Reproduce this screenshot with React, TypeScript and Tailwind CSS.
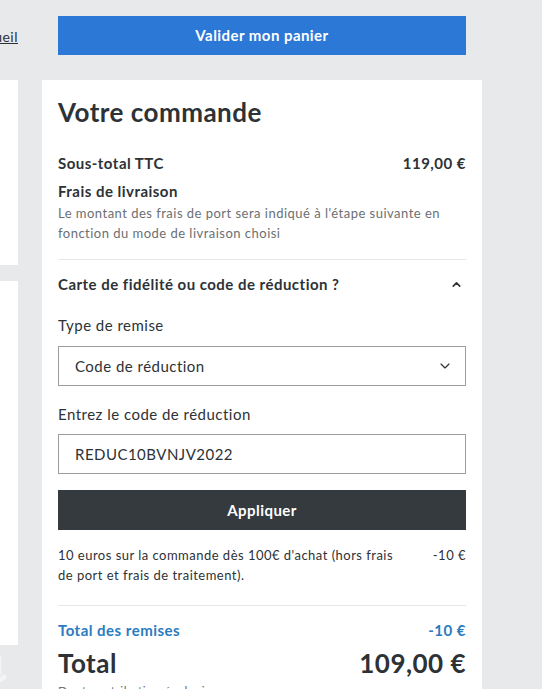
import { ChevronDown, ChevronUp } from "lucide-react";

const Row = ({ label, value }: { label: string; value: string }) => (
  <div className="flex items-center justify-between">
    <span>{label}</span>
    <span>{value}</span>
  </div>
);

export default function App() {
  return (
    <div
      className="w-[542px] h-[689px] overflow-hidden bg-[#e8e9eb] text-[#2d3236] tracking-[0.03em]"
      style={{ fontFamily: "Lato, 'Open Sans', sans-serif" }}
    >
      <div className="flex gap-6 ml-[-282px]">
        {/* left column, mostly off screen */}
        <div className="w-[300px] shrink-0">
          <div className="h-[80px] flex items-center justify-end">
            <a className="text-[14px] underline text-[#2d3236] -mt-[8px]">Retour à l'accueil</a>
          </div>
          <div className="bg-white h-[185px]" />
          <div className="bg-white h-[364px] mt-4" />
          <div className="flex justify-end pr-1 pt-1">
            <svg width="40" height="40" viewBox="0 0 40 40" fill="none">
              <path d="M4 26c4 8 18 10 26 2" stroke="#f4f4f5" strokeWidth="5" strokeLinecap="round" />
              <path d="M26 8v16" stroke="#f4f4f5" strokeWidth="3" strokeLinecap="round" />
            </svg>
          </div>
        </div>

        {/* right column */}
        <div className="w-[440px] shrink-0">
          <div className="h-[80px] px-4 pt-4">
            <button className="w-full h-[39px] bg-[#2b78d6] text-white text-[15px] font-bold tracking-[0.03em]">
              Valider mon panier
            </button>
          </div>
          <div className="bg-white px-4 pt-[17px] pb-6 h-[700px]">
            <h2 className="text-[26px] font-bold leading-[30px] text-[#2d3236]">Votre commande</h2>

            <div className="mt-[26px] text-[15px] font-bold leading-[20px]">
              <Row label="Sous-total TTC" value="119,00 €" />
            </div>
            <div className="mt-2 text-[15px] font-bold leading-[20px]">Frais de livraison</div>
            <p className="mt-[2px] text-[13px] leading-[20px] text-[#6b6f73]">
              Le montant des frais de port sera indiqué à l'étape suivante en fonction du mode de
              livraison choisi
            </p>

            <div className="mt-4 border-t border-[#e6e7e8]" />

            <div className="flex items-center justify-between pt-[14px] text-[15px] font-bold leading-[20px]">
              <span>Carte de fidélité ou code de réduction ?</span>
              <ChevronUp size={13} strokeWidth={3} className="mr-[3px]" />
            </div>

            <div className="mt-[21px] text-[15px] leading-[20px]">Type de remise</div>
            <div className="mt-[11px] h-[40px] border border-[#9a9c9e] flex items-center justify-between pl-4 pr-3 text-[15px]">
              <span>Code de réduction</span>
              <ChevronDown size={16} strokeWidth={1.75} />
            </div>

            <div className="mt-[18px] text-[15px] leading-[20px]">Entrez le code de réduction</div>
            <div className="mt-[10px] h-[40px] border border-[#9a9c9e] flex items-center pl-4 text-[15px]">
              REDUC10BVNJV2022
            </div>

            <button className="mt-4 w-full h-[40px] bg-[#343a3e] text-white text-[15px] font-bold tracking-[0.03em]">
              Appliquer
            </button>

            <div className="mt-[15px] flex justify-between text-[13px] leading-[20px]">
              <p className="w-[345px]">
                10 euros sur la commande dès 100€ d'achat (hors frais de port et frais de
                traitement).
              </p>
              <span>-10 €</span>
            </div>

            <div className="mt-[20px] border-t border-[#e6e7e8]" />

            <div className="pt-[14px] text-[15px] font-bold leading-[20px] text-[#2a7bc0]">
              <Row label="Total des remises" value="-10 €" />
            </div>
            <div className="mt-[8px] flex items-center justify-between text-[26px] font-bold leading-[30px]">
              <span>Total</span>
              <span>109,00 €</span>
            </div>
            <div className="mt-[4px] text-[12px] text-[#6b6f73]">Dont contribution écologique</div>
          </div>
        </div>
      </div>
    </div>
  );
}
